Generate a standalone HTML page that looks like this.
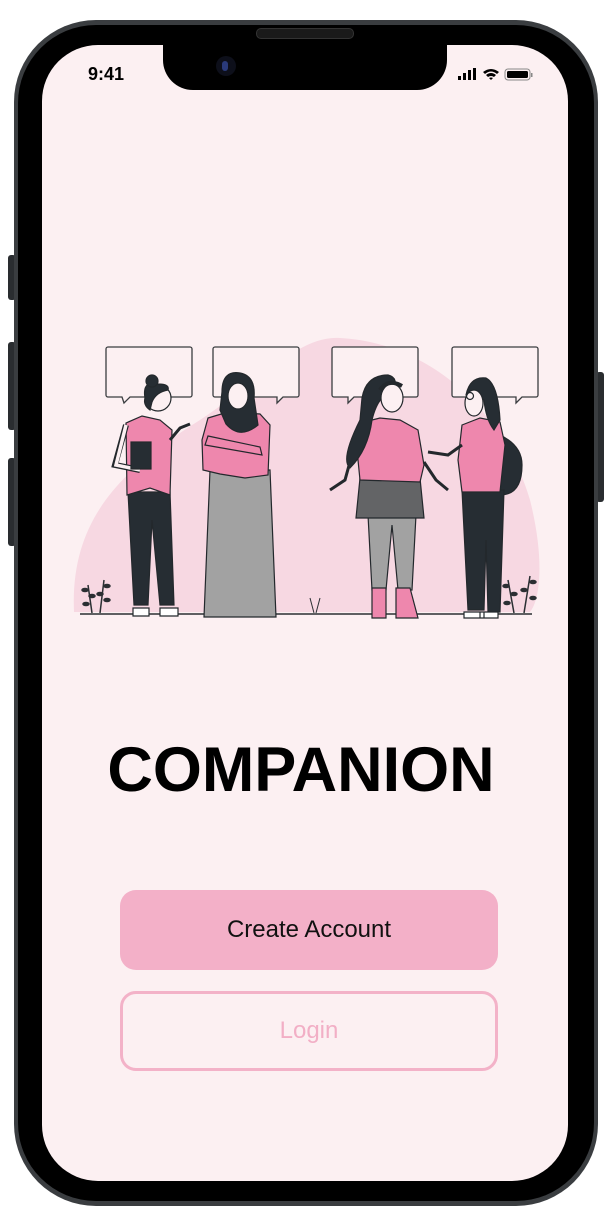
<!DOCTYPE html>
<html><head><meta charset="utf-8"><style>
html,body{margin:0;padding:0;background:#fff;}
body{width:612px;height:1218px;position:relative;overflow:hidden;font-family:"Liberation Sans",sans-serif;}
.abs{position:absolute;}
</style></head><body>
<!-- side buttons -->
<div class="abs" style="left:8px;top:255px;width:8px;height:45px;background:#2a2d30;border-radius:3px"></div>
<div class="abs" style="left:8px;top:342px;width:8px;height:88px;background:#2a2d30;border-radius:3px"></div>
<div class="abs" style="left:8px;top:458px;width:8px;height:88px;background:#2a2d30;border-radius:3px"></div>
<div class="abs" style="left:596px;top:372px;width:8px;height:130px;background:#2a2d30;border-radius:3px"></div>
<!-- frame -->
<div class="abs" style="left:14px;top:20px;width:584px;height:1186px;background:#3a3d40;border-radius:82px"></div>
<div class="abs" style="left:18px;top:25px;width:576px;height:1176px;background:#000;border-radius:78px"></div>
<!-- screen -->
<div class="abs" style="left:42px;top:45px;width:526px;height:1136px;background:#fcf0f2;border-radius:56px;overflow:hidden">
  <!-- notch -->
  <div class="abs" style="left:121px;top:-5px;width:284px;height:50px;background:#000;border-radius:0 0 30px 30px"></div>
  <div class="abs" style="left:174px;top:11px;width:20px;height:20px;background:#0d0f1a;border-radius:50%"></div>
  <div class="abs" style="left:180px;top:16px;width:6px;height:10px;background:#2a3a7a;border-radius:3px"></div>
  <div class="abs" style="left:46px;top:19px;font-size:18px;font-weight:bold;color:#000">9:41</div>
  <svg class="abs" style="left:412px;top:22px" width="80" height="16" viewBox="0 0 80 16">
    <rect x="4" y="9" width="3" height="4" fill="#000"/><rect x="9" y="6" width="3" height="7" fill="#000"/><rect x="14" y="3" width="3" height="10" fill="#000"/><rect x="19" y="1" width="3" height="12" fill="#000"/>
    <path d="M29 5 Q37 -1 45 5 L43 7 Q37 2 31 7Z M32 8 Q37 4 42 8 L40 10 Q37 8 34 10Z M35 11 L37 13 L39 11 Q37 10 35 11Z" fill="#000"/>
    <rect x="51" y="2" width="25" height="11" rx="3" fill="none" stroke="#888" stroke-width="1"/>
    <rect x="53" y="4" width="21" height="7" rx="1.5" fill="#000"/>
    <rect x="77" y="6" width="1.5" height="4" fill="#888"/>
  </svg>
</div>
<div class="abs" style="left:256px;top:28px;width:96px;height:9px;background:#1a1a1a;border-radius:5px;border:1px solid #333"></div>
<!-- illustration -->
<svg class="abs" style="left:0;top:0" width="612" height="700" viewBox="0 0 612 700">
  <path d="M74 612 C70 520 120 470 200 420 C260 380 300 335 340 338 C420 342 500 400 530 500 C545 560 540 600 530 612Z" fill="#f7d8e2"/>
  <line x1="80" y1="614" x2="532" y2="614" stroke="#2b2f33" stroke-width="1.5"/>
  <g fill="#fcf0f2" stroke="#3a3d40" stroke-width="1.3">
    <path d="M108 347 h82 a2 2 0 0 1 2 2 v46 a2 2 0 0 1 -2 2 h-60 l-6 6 l-2 -6 h-14 a2 2 0 0 1 -2 -2 v-46 a2 2 0 0 1 2 -2z"/>
    <path d="M215 347 h82 a2 2 0 0 1 2 2 v46 a2 2 0 0 1 -2 2 h-14 l-6 6 l0 -6 h-62 a2 2 0 0 1 -2 -2 v-46 a2 2 0 0 1 2 -2z"/>
    <path d="M334 347 h82 a2 2 0 0 1 2 2 v46 a2 2 0 0 1 -2 2 h-62 l-6 6 l0 -6 h-14 a2 2 0 0 1 -2 -2 v-46 a2 2 0 0 1 2 -2z"/>
    <path d="M454 347 h82 a2 2 0 0 1 2 2 v46 a2 2 0 0 1 -2 2 h-14 l-6 6 l0 -6 h-62 a2 2 0 0 1 -2 -2 v-46 a2 2 0 0 1 2 -2z"/>
  </g>
  <!-- figure 1 -->
  <g stroke="#23282c" stroke-width="1.2">
    <path d="M128 492 L134 605 L148 605 L152 520 L160 605 L174 605 L170 492Z" fill="#262d33"/>
    <path d="M133 608 h16 v8 h-16z M160 608 h18 v8 h-18z" fill="#fff"/>
    <path d="M126 423 L142 416 L160 420 L172 430 L170 495 L150 488 L127 495Z" fill="#ee87ad"/>
    <path d="M126 425 L115 465 L140 470" fill="none" stroke-width="6" stroke="#23282c"/>
    <path d="M126 425 L116 465 L140 470" fill="none" stroke-width="3.5" stroke="#fcf0f2"/>
    <rect x="131" y="442" width="20" height="27" fill="#262d33"/>
    <path d="M170 440 L180 428 L190 424" fill="none" stroke-width="3" />
    <circle cx="158" cy="398" r="13" fill="#fcf0f2"/>
    <path d="M145 398 Q142 380 158 384 Q170 384 168 390 Q156 392 152 402 L150 410 Q143 405 145 398Z" fill="#262d33"/>
    <circle cx="152" cy="381" r="6" fill="#262d33"/>
  </g>
  <!-- figure 2 -->
  <g stroke="#23282c" stroke-width="1.2">
    <path d="M210 470 L204 617 L276 617 L270 470Z" fill="#a2a2a2"/>
    <path d="M208 418 L228 412 L260 414 L270 425 L268 475 L245 478 L220 474 L203 470 L202 440Z" fill="#ee87ad"/>
    <path d="M205 445 L262 455 L260 447 L208 436Z" fill="#ee87ad"/>
    <path d="M222 392 Q222 370 240 373 Q256 376 254 398 L258 425 Q240 440 226 424 L220 410Z" fill="#262d33"/>
    <ellipse cx="238" cy="396" rx="10" ry="13" fill="#fcf0f2"/>
  </g>
  <!-- figure 3 -->
  <g stroke="#23282c" stroke-width="1.2">
    <path d="M368 515 L372 590 L386 590 L392 525 L398 590 L412 590 L416 515Z" fill="#a2a2a2"/>
    <path d="M372 588 h14 v30 h-14z M396 588 h14 l8 30 h-22z" fill="#ee87ad"/>
    <path d="M360 478 L356 518 L424 518 L420 478Z" fill="#636466"/>
    <path d="M364 422 L380 418 L400 420 L418 430 L424 465 L420 482 L360 480 L356 440Z" fill="#ee87ad"/>
    <path d="M356 440 L345 480 L330 490 M424 462 L436 480 L448 490" fill="none" stroke-width="3"/>
    <path d="M360 420 Q340 460 350 468 Q368 450 372 420 Q378 395 392 392 Q400 378 388 375 Q366 375 362 398Z" fill="#262d33"/>
    <ellipse cx="392" cy="398" rx="11" ry="14" fill="#fcf0f2"/>
    <path d="M380 390 Q388 378 402 386" fill="none" stroke-width="4"/>
  </g>
  <!-- figure 4 -->
  <g stroke="#23282c" stroke-width="1.2">
    <path d="M486 430 Q522 440 522 465 Q522 495 500 495 L486 480Z" fill="#262d33"/>
    <path d="M462 490 L468 610 L484 610 L486 540 L488 612 L500 612 L504 490Z" fill="#262d33"/>
    <path d="M464 612 h20 v6 h-20z M480 612 h18 v6 h-18z" fill="#fff"/>
    <path d="M462 425 L480 418 L500 422 L505 445 L500 492 L462 492 L458 460Z" fill="#ee87ad"/>
    <path d="M462 445 L448 455 L428 452" fill="none" stroke-width="3"/>
    <path d="M466 395 Q470 376 486 378 Q498 384 500 420 L494 430 Q486 420 484 400Z" fill="#262d33"/>
    <ellipse cx="474" cy="403" rx="9" ry="13" fill="#fcf0f2"/>
    <circle cx="470" cy="396" r="3.5" fill="none"/>
  </g>
  <!-- plants -->
  <g stroke="#2b2f33" stroke-width="1.5" fill="#2b2f33">
    <path d="M92 613 L88 585 M100 613 L104 580" fill="none"/>
    <ellipse cx="85" cy="590" rx="3" ry="1.5"/><ellipse cx="92" cy="596" rx="3" ry="1.5"/><ellipse cx="86" cy="604" rx="3" ry="1.5"/>
    <ellipse cx="107" cy="586" rx="3" ry="1.5"/><ellipse cx="100" cy="594" rx="3" ry="1.5"/><ellipse cx="107" cy="600" rx="3" ry="1.5"/>
    <path d="M514 613 L508 580 M524 613 L530 576" fill="none"/>
    <ellipse cx="506" cy="586" rx="3" ry="1.5"/><ellipse cx="514" cy="594" rx="3" ry="1.5"/><ellipse cx="507" cy="603" rx="3" ry="1.5"/>
    <ellipse cx="533" cy="582" rx="3" ry="1.5"/><ellipse cx="524" cy="590" rx="3" ry="1.5"/><ellipse cx="533" cy="598" rx="3" ry="1.5"/>
    <path d="M314 613 L310 598 M316 613 L320 598" fill="none" stroke-width="1"/>
  </g>
</svg>
<!-- title -->
<div class="abs" style="left:0;width:602px;top:734px;text-align:center;font-size:63px;font-weight:bold;color:#000;letter-spacing:0px">COMPANION</div>
<!-- buttons -->
<div class="abs" style="left:120px;top:890px;width:378px;height:80px;background:#f3b0c8;border-radius:16px;display:flex;align-items:center;justify-content:center;font-size:24px;color:#111">Create Account</div>
<div class="abs" style="left:120px;top:991px;width:372px;height:74px;border:3px solid #f3b2c8;border-radius:16px;display:flex;align-items:center;justify-content:center;font-size:24px;color:#f2afc6">Login</div>
</body></html>
